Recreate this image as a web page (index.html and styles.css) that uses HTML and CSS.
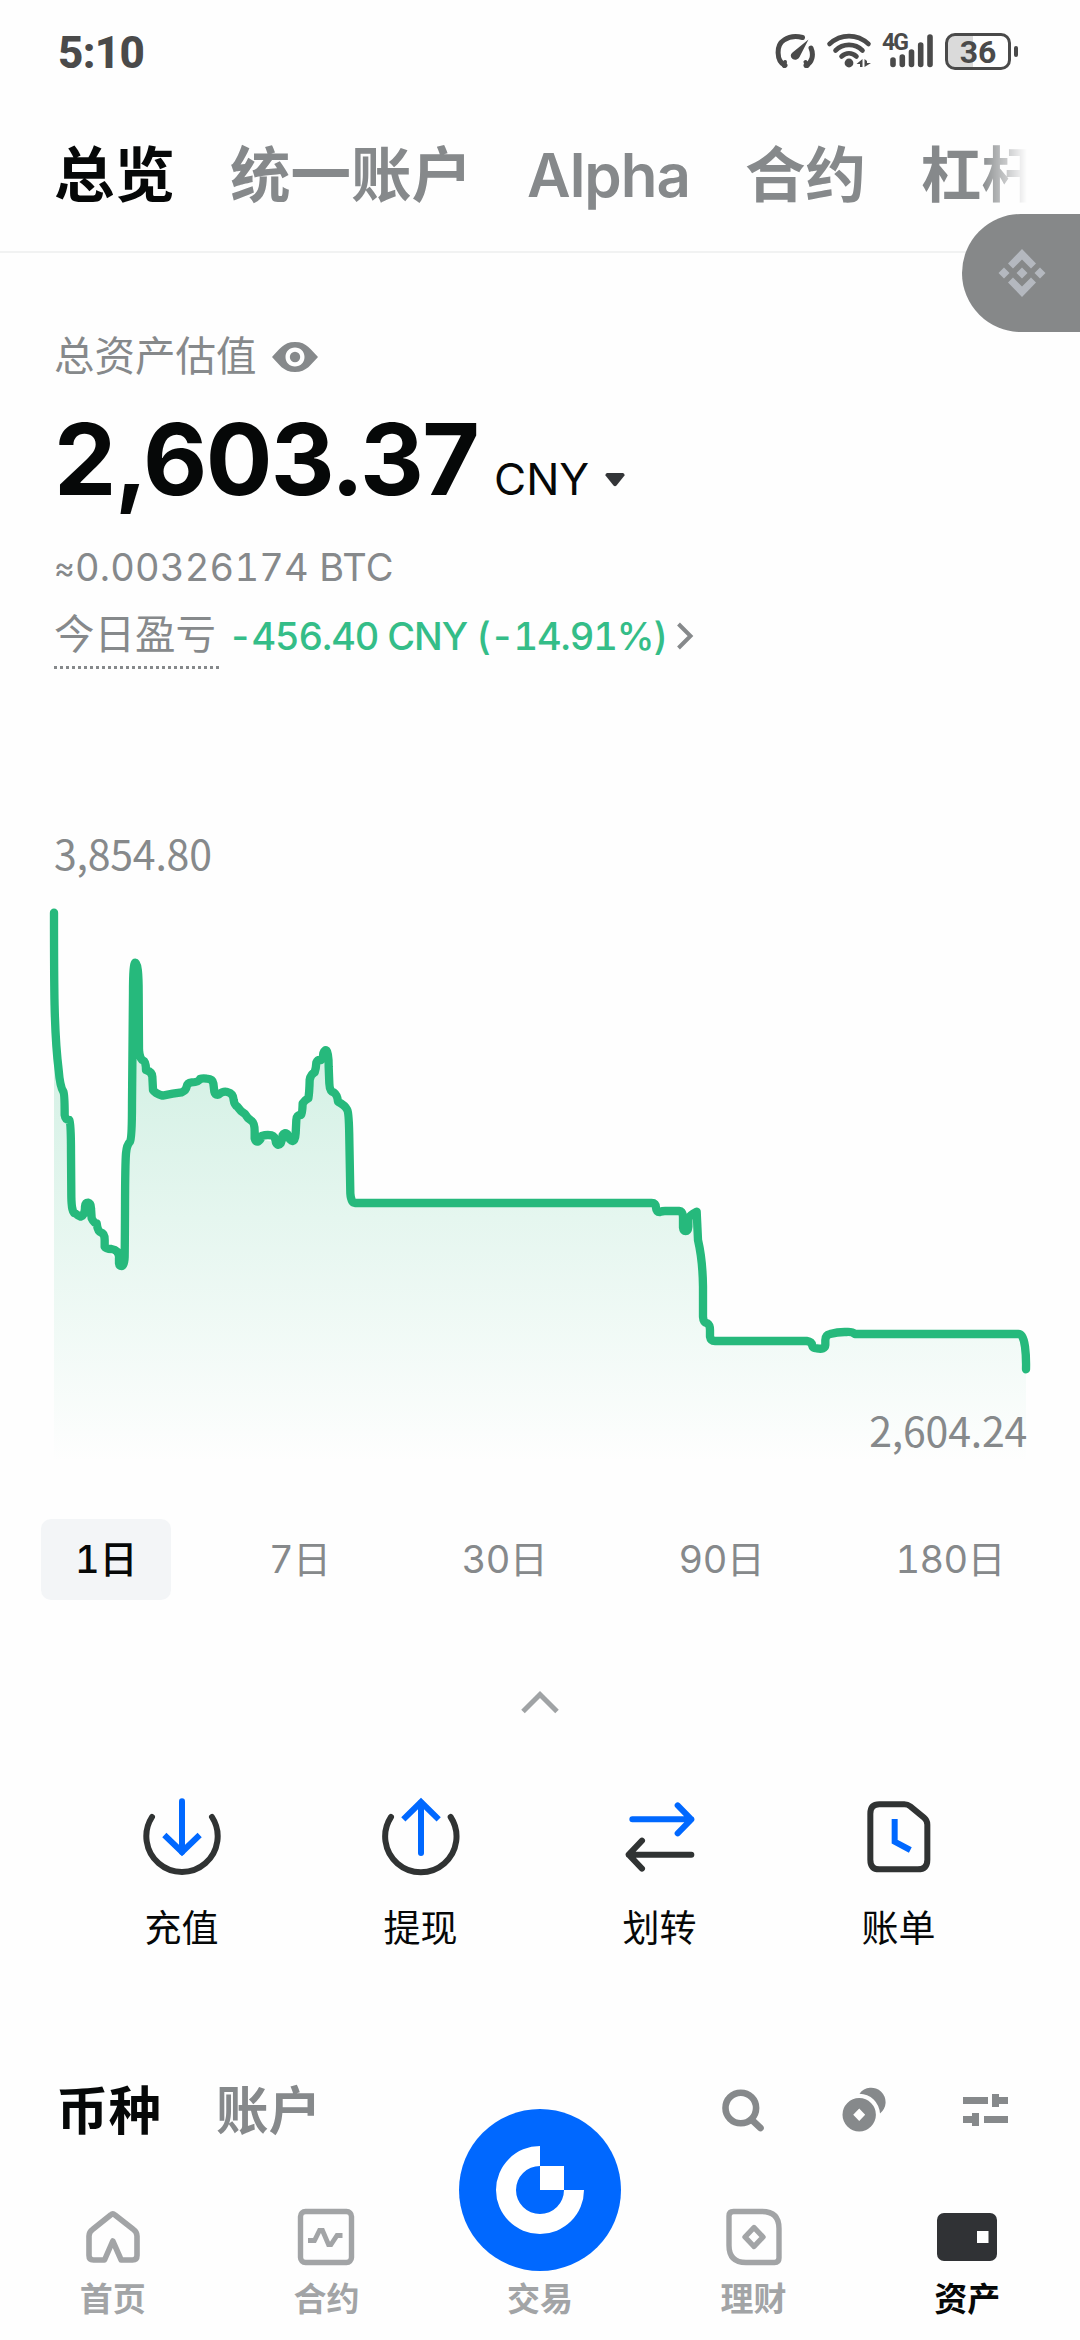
FILE: index.html
```html
<!DOCTYPE html>
<html lang="zh-CN">
<head>
<meta charset="utf-8">
<title>资产</title>
<link rel="stylesheet" href="styles.css">
</head>
<body>
<div class="screen">
  <header class="status">
    <span class="clock">5:10</span>
    <div class="status-icons">
      <svg class="gauge" width="42" height="38" viewBox="774 32 42 38" fill="none" stroke="#4a4a4a" stroke-width="5" stroke-linecap="round">
        <path d="M785 65.500C776 61 776 45 784 40C790 36 797 36 802.500 37.500M811 48C814 55 812 63 806 65.500"/>
        <path d="M785 62l-1 4M805.500 62l2 4" stroke-width="4"/>
        <path d="M808.500 39.500L799.500 57a4.500 4 0 1 1-7-4.500z" fill="#4a4a4a" stroke="none"/>
      </svg>
      <svg class="wifi" width="48" height="38" viewBox="825 32 48 38" fill="none" stroke="#4a4a4a" stroke-width="4.600" stroke-linecap="round">
        <path d="M829.500 44C841 33.500 857 33.500 868.500 44M835.500 50.500C843 43 855 43 862.500 50.500M841.500 56.500C846 52.300 852 52.300 856.500 56.500"/>
        <circle cx="849" cy="63" r="4.400" fill="#4a4a4a" stroke="none"/>
        <path d="M862.500 59v8h-2.500v-3h-3.500zM864.500 67v-8l2.500 2v2h4z" fill="#4a4a4a" stroke="none"/>
      </svg>
      <div class="cell">
        <span class="cell-type">4G</span>
        <svg width="46" height="36" viewBox="889 33 46 36" stroke="#4a4a4a" stroke-width="5.600" stroke-linecap="round">
          <path d="M893 60v4.500M902.300 57v7.500M911.500 52v12.500M920.700 45v19.500M930 37v27.500"/>
        </svg>
      </div>
      <div class="battery"><span>36</span></div>
    </div>
  </header>

  <nav class="tabs">
    <a class="tab active">总览</a>
    <a class="tab">统一账户</a>
    <a class="tab latin">Alpha</a>
    <a class="tab">合约</a>
    <a class="tab">杠杆</a>
  </nav>

  <section class="summary">
    <div class="row label-row">
      <span>总资产估值</span>
      <svg width="46" height="30" viewBox="0 0 46 30"><path fill="#86898b" fill-rule="evenodd" d="M0 15C7 8 11 0 23 0s16 8 23 15C39 22 35 30 23 30S7 22 0 15zM23 5.500c-5.500 0-9.500 4-9.500 9.500s4 9.500 9.500 9.500 9.500-4 9.500-9.500-4-9.500-9.500-9.500z"/><circle cx="23" cy="15" r="5.200" fill="#86898b"/></svg>
    </div>
    <div class="amount-row">
      <span class="amount">2,603.37</span>
      <span class="currency">CNY</span>
      <svg class="caret" width="20" height="14" viewBox="0 0 20 14"><path fill="#333538" d="M2 0h16q2 .5 1.500 2.500L11.500 12.500q-1.500 1.500-3 0L.5 2.500Q0 .5 2 0z"/></svg>
    </div>
    <div class="row btc"><span class="approx">≈</span>0.00326174 BTC</div>
    <div class="row pnl">
      <span class="pnl-label">今日盈亏</span>
      <span class="pnl-value">-456.40 CNY (-14.91%)</span>
      <svg width="18" height="28" viewBox="0 0 18 28" fill="none" stroke="#86898b" stroke-width="4"><path d="M2.500 2L14.500 14 2.500 26"/></svg>
    </div>
  </section>

  <section class="chart">
    <span class="chart-high">3,854.80</span>
    <svg class="plot" viewBox="-90 240 3240 1710">
      <defs>
        <linearGradient id="area" gradientUnits="userSpaceOnUse" x1="0" y1="278" x2="0" y2="1930">
          <stop offset="0" stop-color="#26b97c" stop-opacity=".26"/>
          <stop offset="1" stop-color="#26b97c" stop-opacity="0"/>
        </linearGradient>
        <path id="line" d="M72 278C72 500 72 640 86 750Q90 800 100 815Q104 822 104 885Q106 900 118 900Q123 910 123 1000L124 1130Q125 1180 135 1180Q145 1188 152 1190Q165 1185 165 1160Q166 1148 174 1148Q183 1150 183 1165L185 1195Q192 1210 200 1210Q203 1235 212 1237Q224 1240 224 1260V1280Q228 1287 245 1287Q265 1290 267 1310V1330Q268 1338 275 1338Q283 1338 284 1310C286 1150 284 1050 288 1000Q290 975 300 965Q306 955 306 850L309 520Q309 428 316 428Q326 428 326 520L327 690Q329 718 340 722Q348 725 348 750Q366 755 367 770L369 810Q375 820 398 827Q430 820 455 817Q468 812 470 800Q472 788 485 787Q505 787 510 777Q518 774 530 776Q548 777 550 790L553 815Q555 825 565 824Q580 812 592 816Q610 820 611 840Q613 855 622 860Q632 875 645 882Q652 895 665 903Q674 910 674 935V955Q677 966 685 964Q692 960 695 948Q710 943 725 946Q735 948 738 968Q744 980 752 970Q758 955 758 945Q762 936 772 942Q778 962 788 963Q796 962 797 940L799 900Q800 885 813 885Q817 880 818 850Q825 840 835 835Q838 820 839 780Q842 762 854 757Q858 745 859 728Q863 718 873 720Q879 715 880 700Q884 688 890 692Q896 698 896 740L898 790Q899 815 912 818Q922 825 924 845Q945 855 952 870Q957 880 958 960L961 1120Q963 1149 975 1149H1865Q1878 1149 1878 1163Q1879 1177 1890 1176Q1897 1173 1905 1173H1947Q1958 1174 1959 1190V1222Q1960 1233 1967 1233Q1974 1233 1975 1220V1195Q1980 1185 2000 1175L2004 1260Q2018 1320 2019 1400V1490Q2020 1508 2032 1510Q2040 1515 2040 1530V1550Q2042 1563 2055 1563H2330Q2345 1565 2346 1575Q2348 1585 2360 1585Q2385 1590 2386 1575V1560Q2386 1545 2400 1542Q2425 1535 2450 1536Q2467 1535 2475 1542H2965Q2980 1542 2985 1580Q2989 1610 2988 1648"/>
        <clipPath id="span"><path d="M72 240H2988V1930H72z"/></clipPath>
      </defs>
      <path fill="url(#area)" clip-path="url(#span)" d="M72 278C72 500 72 640 86 750L104 885 123 1000 124 1130 152 1190 174 1148 185 1195 224 1280 275 1338 284 1310 288 1000 306 850 316 428 327 690 348 750 369 810 398 827 470 800 530 776 565 824 592 816 645 882 674 955 752 970 797 940 839 780 890 692 898 790 952 870 961 1149H1870L1890 1173H1950L1967 1230 2000 1175 2019 1490 2040 1563H2340L2386 1575 2400 1542H2970L2988 1648V1930H72z"/>
      <use href="#line" fill="none" stroke="#26b97c" stroke-width="25" stroke-linecap="round" stroke-linejoin="round"/>
    </svg>
    <span class="chart-low">2,604.24</span>
  </section>

  <div class="ranges">
    <span class="range active">1日</span>
    <span class="range">7日</span>
    <span class="range">30日</span>
    <span class="range">90日</span>
    <span class="range">180日</span>
  </div>

  <div class="collapse">
    <svg width="38" height="24" viewBox="0 0 38 24" fill="none" stroke="#a0a3a5" stroke-width="5"><path d="M2 21.500L19 4.500 36 21.500"/></svg>
  </div>

  <section class="actions">
    <div class="action">
      <svg width="80" height="80" viewBox="125 78 240 240" fill="none" stroke-width="18" stroke-linecap="round"><path stroke="#303333" d="M155 141A107 107 0 1 0 335 141"/><path stroke="#0068ff" d="M245 94V246"/><path stroke="#0068ff" stroke-linecap="butt" d="M192 195L245 246 298 195"/></svg>
      <span>充值</span>
    </div>
    <div class="action">
      <svg width="80" height="80" viewBox="842 78 240 240" fill="none" stroke-width="18" stroke-linecap="round"><path stroke="#303333" d="M872 141A107 107 0 1 0 1051 141"/><path stroke="#0068ff" d="M962 249V98"/><path stroke="#0068ff" stroke-linecap="butt" d="M909 148L962 96 1015 148"/></svg>
      <span>提现</span>
    </div>
    <div class="action">
      <svg width="80" height="80" viewBox="119 78 240 240" fill="none" stroke-width="18" stroke-linecap="round" stroke-linejoin="round"><path stroke="#0068ff" d="M156 148H333M292 106L333 148 292 190"/><path stroke="#303333" d="M333 254H145M185 212L145 254 185 296"/></svg>
      <span>划转</span>
    </div>
    <div class="action">
      <svg width="80" height="80" viewBox="836 78 240 240" fill="none" stroke-width="18"><path stroke="#303333" d="M897 103H972Q982 103 990 109L1031 143Q1041 151 1041 164V269Q1041 298 1012 298H897Q870 298 870 269V131Q870 103 897 103z"/><path stroke="#0068ff" d="M943 147V215L990 240"/></svg>
      <span>账单</span>
    </div>
  </section>

  <section class="assets-head">
    <a class="sub active">币种</a>
    <a class="sub">账户</a>
    <div class="tools">
      <svg width="44" height="44" viewBox="721 2088 44 44" fill="none" stroke="#86898b" stroke-width="6.600" stroke-linecap="round"><circle cx="740.800" cy="2108" r="15.300"/><path d="M752.500 2120.500L760.500 2128"/></svg>
      <svg width="44" height="46" viewBox="842 2087 44 46" fill="#86898b"><path fill-rule="evenodd" d="M842.500 2114.700a16.700 16.700 0 1 0 33.400 0a16.700 16.700 0 1 0-33.400 0zM859.200 2108.500l6 6.200-6 6.200-6-6.200z"/><path d="M859.500 2093.700A14.400 14.400 0 1 1 880 2113.500A21 21 0 0 0 859.500 2093.700z"/></svg>
      <svg width="46" height="34" viewBox="963 2093 46 34" fill="#86898b"><path d="M963 2097h25v7h-25zM992 2094h7v3h9v7h-9v3h-7zM963 2116h9v-3h7v13h-7v-3h-9zM984 2116h24v7h-24z"/></svg>
    </div>
  </section>

  <nav class="bottom">
    <a class="nav-item">
      <svg width="60" height="60" viewBox="83 2207 60 60" fill="none" stroke="#a2a4a6" stroke-width="5.600" stroke-linejoin="round"><path d="M104.500 2260L112.800 2241 121.200 2260H132.500Q137 2260 137 2255.500V2236Q137 2232 133.500 2229.500L115 2215Q112.800 2213 110.600 2215L92.500 2229.500Q89 2232 89 2236V2255.500Q89 2260 93.500 2260z"/></svg>
      <span>首页</span>
    </a>
    <a class="nav-item">
      <svg width="60" height="60" viewBox="296 2207 60 60" fill="none" stroke="#a2a4a6" stroke-width="5.400"><rect x="300.500" y="2211.500" width="51" height="51" rx="5"/><path stroke-width="4.800" d="M308 2240.500H314.500L319.500 2230.500H322.500L328.500 2244.500H331L337 2235.500H342.500"/></svg>
      <span>合约</span>
    </a>
    <a class="nav-item center">
      <span class="trade"><svg width="162" height="162" viewBox="-81 -81 162 162" fill="#fff"><path d="M0-44V-24A24 24 0 1 0 24 0H44A44 44 0 1 1 0-44zM0-24H24V0H0z"/></svg></span>
      <span>交易</span>
    </a>
    <a class="nav-item">
      <svg width="60" height="60" viewBox="722 2207 60 60" fill="none" stroke="#a2a4a6" stroke-width="5.400"><path d="M731.500 2211.500H760Q777 2211.500 777 2228.500V2258Q777 2262.500 772.500 2262.500H744Q727 2262.500 727 2245.500V2216Q727 2211.500 731.500 2211.500z"/><path stroke-linejoin="round" d="M752 2227.500L761 2237 752 2246.500 743 2237z"/></svg>
      <span>理财</span>
    </a>
    <a class="nav-item active">
      <svg width="60" height="60" viewBox="936 2207 60 60"><rect x="936" y="2213" width="60" height="48" rx="7" fill="#303235"/><path fill="#fff" d="M976 2231h11.500v12h-11.500z"/></svg>
      <span>资产</span>
    </a>
  </nav>

  <div class="floating">
    <svg width="48" height="50" viewBox="-24 -25 48 50" fill="#b4b8bf"><path d="M0-24L14-9.500 9-4.500 0-13.500-9-4.500-14-9.500zM0 24L14 9.500 9 4.500 0 13.500-9 4.500-14 9.500zM0-5.500L5.500 0 0 5.500-5.500 0zM-18-5.500L-12.500 0-18 5.500-23.500 0zM18-5.500L23.500 0 18 5.500 12.500 0z"/></svg>
  </div>
</div>
</body>
</html>
```
FILE: styles.css
```css
* { box-sizing: border-box; }
body {
  margin: 0;
  background: #fefefe;
  color: #060808;
  font-family: Inter, "Noto Sans CJK SC", sans-serif;
}
svg { display: block; flex: none; }
.screen {
  position: relative;
  width: 1080px;
  height: 2340px;
  overflow: hidden;
  display: flex;
  flex-direction: column;
}
.status {
  height: 102px;
  padding: 0 62px 0 58px;
  display: flex;
  align-items: center;
  justify-content: space-between;
  color: #4a4a4a;
  font-family: Roboto, sans-serif;
  font-weight: 700;
}
.clock { font-size: 44px; font-weight: 800; letter-spacing: -.7px; padding-top: 3px; }
.status-icons { display: flex; align-items: center; }
.wifi { margin-left: 9px; }
.cell { position: relative; margin-left: 16px; }
.cell-type {
  position: absolute;
  left: -7px;
  top: 0;
  font-size: 23px;
  line-height: 20px;
  letter-spacing: -2px;
}
.battery {
  position: relative;
  width: 66px;
  height: 37px;
  margin-left: 10px;
  margin-right: 7px;
  border: 3px solid #4a4a4a;
  border-radius: 10px;
  background: linear-gradient(90deg, #dadada 25px, transparent 25px);
  font-size: 32px;
  line-height: 32px;
  text-align: center;
}
.battery::after {
  content: "";
  position: absolute;
  right: -10px;
  top: 10px;
  width: 4px;
  height: 11px;
  border-radius: 2px;
  background: #4a4a4a;
}
.tabs {
  height: 151px;
  padding: 0 0 3px 54px;
  display: flex;
  align-items: center;
  gap: 55px;
  border-bottom: 2px solid #f1f2f2;
  white-space: nowrap;
}
.tab {
  flex: none;
  color: #86898b;
  font-size: 60.500px;
  line-height: 90px;
  font-weight: 700;
}
.tab.latin { font-size: 60px; font-weight: 600; letter-spacing: -1px; }
.tab.active { color: #060808; }
.tab:last-child {
  -webkit-mask-image: linear-gradient(90deg, #000 60px, transparent 106px);
  mask-image: linear-gradient(90deg, #000 60px, transparent 106px);
}
.summary { height: 544px; padding: 76px 54px 0; }
.row { display: flex; align-items: center; color: #86898b; }
.label-row { height: 52px; font-size: 40.500px; gap: 15px; }
.label-row span { margin-top: -3px; }
.label-row svg { margin-top: 4px; }
.amount-row {
  height: 100px;
  margin-top: 28px;
  display: flex;
  align-items: baseline;
  line-height: 100px;
}
.amount { font-size: 99px; font-weight: 700; letter-spacing: -1.700px; }
.currency { font-size: 44px; margin-left: 16px; }
.caret { margin-left: 16px; align-self: center; margin-top: 41px; }
.btc { height: 56px; margin-top: 30px; font-size: 38px; white-space: pre; letter-spacing: .2px; font-variant-numeric: tabular-nums; }
.approx { font-size: 32px; }
.pnl { height: 67px; margin-top: 7px; }
.pnl-label {
  height: 67px;
  width: 165px;
  line-height: 66px;
  font-size: 40.500px;
  background: repeating-linear-gradient(90deg, #86898b 0 3px, transparent 3px 6px) left bottom / 100% 3px no-repeat;
}
.pnl-value {
  margin-left: 9px;
  width: 438px;
  color: #34bd88;
  font-size: 38px;
  font-weight: 500;
  font-variant-numeric: tabular-nums;
  letter-spacing: -1.100px;
  white-space: nowrap;
}
.pnl svg { margin-left: 10px; }
.chart { position: relative; height: 722px; padding-top: 30px; }
.chart-high, .chart-low {
  color: #86898b;
  font-family: "Noto Sans CJK SC", sans-serif;
  font-size: 41px;
  line-height: 50px;
  letter-spacing: -.2px;
}
.chart-high { display: block; margin-left: 54px; }
.plot { width: 1080px; height: 570px; margin-top: 23px; }
.chart-low { position: absolute; right: 53px; top: 607px; }
.ranges {
  height: 81px;
  padding: 0 42px 0 41px;
  display: flex;
  justify-content: space-between;
}
.range {
  padding: 0 33px 0 34px;
  border-radius: 10px;
  color: #86898b;
  font-size: 38px;
  line-height: 80px;
  font-variant-numeric: tabular-nums;
  letter-spacing: -.6px;
}
.range.active { background: #f3f5f7; color: #060808; font-weight: 500; letter-spacing: 0; }
.collapse { height: 196px; padding-top: 90px; display: flex; justify-content: center; }
.actions {
  height: 260px;
  padding: 0 62px;
  display: grid;
  grid-template-columns: repeat(4, 1fr);
}
.action {
  display: flex;
  flex-direction: column;
  align-items: center;
  font-size: 37px;
  line-height: 52px;
}
.action span { margin-top: 27px; }
.assets-head {
  height: 108px;
  padding: 0 71px 0 56px;
  display: flex;
  align-items: center;
}
.sub { color: #86898b; font-size: 52.500px; line-height: 76px; font-weight: 700; margin-right: 55px; padding-top: 2px; }
.sub.active { color: #060808; }
.tools { margin-left: auto; display: flex; align-items: center; gap: 77px; }
.bottom {
  height: 176px;
  padding: 43px 6px 0 6px;
  display: grid;
  grid-template-columns: repeat(5, 1fr);
}
.nav-item {
  position: relative;
  display: flex;
  flex-direction: column;
  align-items: center;
  color: #a2a4a6;
  font-size: 33px;
  line-height: 46px;
  font-weight: 700;
}
.nav-item > span:last-child { margin-top: 9px; }
.nav-item.active { color: #060808; }
.nav-item.center { padding-top: 60px; }
.trade {
  position: absolute;
  top: -98px;
  width: 162px;
  height: 162px;
  border-radius: 50%;
  background: #0068ff;
}
.floating {
  position: absolute;
  right: 0;
  top: 214px;
  width: 118px;
  height: 118px;
  padding-left: 36px;
  border-radius: 59px 0 0 59px;
  background: #868889;
  display: flex;
  align-items: center;
}
```
